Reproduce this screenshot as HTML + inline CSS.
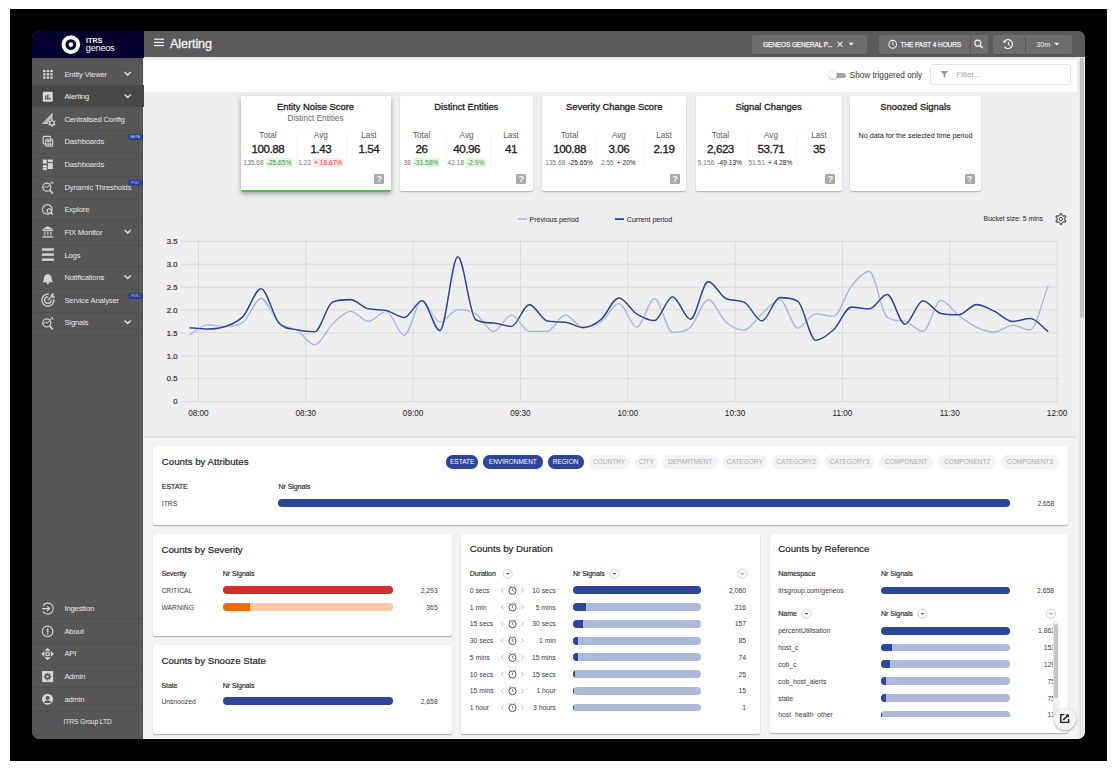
<!DOCTYPE html>
<html><head><meta charset="utf-8">
<style>
*{margin:0;padding:0;box-sizing:border-box}
html,body{width:1117px;height:775px;overflow:hidden;background:#fff;font-family:"Liberation Sans",sans-serif}
.a{position:absolute}
#frame{position:absolute;left:10px;top:9px;width:1097px;height:752px;background:#000}
#app{position:absolute;left:32px;top:31px;width:1053px;height:708px;background:#eeeeee;border-radius:7px;overflow:hidden}
#side{position:absolute;left:0;top:0;width:111.4px;height:708px;background:#565656}
#sidehead{position:absolute;left:0;top:0;width:112px;height:27px;background:#06002e}
.st{position:absolute;left:64.4px;font-size:7.6px;line-height:10px;color:#e8e8e8;white-space:nowrap;letter-spacing:-0.12px}
.badge{position:absolute;left:128px;width:14.5px;height:6px;border-radius:3px;background:#2d3f9a;color:#cfd6f5;font-size:3.6px;line-height:6px;text-align:center;letter-spacing:0.1px}

.hb{position:absolute;top:34.8px;height:19.4px;background:#6d6d6d;border-radius:2.5px;box-shadow:0 0.6px 0 #4a4a4a}
.ht{position:absolute;font-size:6.5px;line-height:8px;color:#f2f2f2;white-space:nowrap;-webkit-text-stroke:0.25px #f2f2f2}
.card{position:absolute;top:96.3px;height:94.7px;background:#fff;border-radius:2px;box-shadow:0 1px 1.5px rgba(0,0,0,0.25)}
.ctitle{position:absolute;left:0;right:0;top:102.2px;text-align:center;font-size:9.4px;line-height:10px;color:#1e1e1e;white-space:nowrap;-webkit-text-stroke:0.3px #1e1e1e}
.lab{position:absolute;font-size:8.2px;line-height:10px;color:#5a5a5a;text-align:center;white-space:nowrap;width:60px;margin-left:-30px}
.val{position:absolute;font-size:11.6px;line-height:12px;color:#1a1a1a;text-align:center;white-space:nowrap;width:80px;margin-left:-40px;letter-spacing:-0.45px;-webkit-text-stroke:0.3px #1a1a1a}
.chg{position:absolute;font-size:6.6px;line-height:8px;color:#777;white-space:nowrap}
.pos{background:#e6f4e6;color:#3a973a;padding:1px 1.2px;border-radius:1px}
.neg{background:#fce6e6;color:#dc4848;padding:1px 1.2px;border-radius:1px}
.blk{color:#222;padding:0 1.2px}
.qm{position:absolute;width:10px;height:10px;background:#a9a9a9;border-radius:1.2px;color:#fff;font-size:9.4px;line-height:10.4px;text-align:center;font-weight:bold}
.vdiv{position:absolute;top:134px;height:32px;width:0.8px;background:#f5f5f5}

.yl{left:137px;width:40.5px;text-align:right;font-size:7.7px;line-height:10px;color:#222;-webkit-text-stroke:0.15px #222}
.xl{width:40px;text-align:center;font-size:8.2px;line-height:10px;color:#1a1a1a}
.leg{font-size:7.1px;line-height:10px;color:#222;white-space:nowrap}
.sc{position:absolute;background:#fff;border-radius:2px;box-shadow:0 1px 1.2px rgba(0,0,0,0.3)}
.stt{font-size:9.7px;line-height:12px;color:#1e1e1e;white-space:nowrap;-webkit-text-stroke:0.2px #1e1e1e}
.sh{font-size:7.1px;line-height:10px;color:#1e1e1e;white-space:nowrap;-webkit-text-stroke:0.15px #1e1e1e;letter-spacing:-0.1px}
.sx{font-size:6.8px;line-height:10px;color:#3a3a3a;white-space:nowrap}
.chip{position:absolute;top:455.3px;height:13.3px;border-radius:6.6px;background:#2c4597;color:#fff;font-size:6.5px;line-height:13.3px;text-align:center;white-space:nowrap;overflow:hidden}
.chip.off{background:#f3f3f3;color:#a9a9a9}
</style></head>
<body>
<div id="frame"></div>
<div id="app">
  <div id="main" class="a" style="left:112px;top:0;width:941px;height:708px;background:#eeeeee"></div>
  <div id="side">
    <div id="sidehead"></div>
    <div class="a" style="left:0;top:54px;width:112px;height:22.4px;background:#484848"></div>
  </div>
</div>

<svg class="a" style="left:0;top:0" width="140" height="60">
  <circle cx="70.85" cy="44.6" r="9.3" fill="#fff"/>
  <path d="M68.6,35.1 l1.6,0.2 l-0.8,1.1 z M75.2,36.2 l2.2,0.4 l-1.4,1.3 z M60.9,44.8 l0.9,1.8 l-1.2,0.3 z M63.2,51.2 l1.6,0.8 l-1.4,0.9 z M79.9,47.5 l0.5,1.6 l-1.3,-0.2 z" fill="#06002e"/>
  <circle cx="70.85" cy="44.6" r="5.4" fill="#06002e"/>
  <circle cx="70.85" cy="44.6" r="2.3" fill="#fff"/>
</svg>
<div class="a" style="left:86px;top:37.2px;font-size:6.9px;line-height:8px;font-weight:bold;color:#fff;letter-spacing:0.2px">ITRS</div>
<div class="a" style="left:85.8px;top:43.1px;font-size:9.2px;line-height:10px;color:#fff;letter-spacing:-0.25px">geneos</div>
<!-- sidebar content in page coordinates -->
<svg class="a" style="left:0;top:0" width="1117" height="775">
<rect x="43.1" y="69.9" width="2.4" height="2.2" fill="#d6d6d6"/><rect x="43.1" y="73.2" width="2.4" height="2.2" fill="#d6d6d6"/><rect x="43.1" y="76.5" width="2.4" height="2.2" fill="#d6d6d6"/><rect x="46.7" y="69.9" width="2.4" height="2.2" fill="#d6d6d6"/><rect x="46.7" y="73.2" width="2.4" height="2.2" fill="#d6d6d6"/><rect x="46.7" y="76.5" width="2.4" height="2.2" fill="#d6d6d6"/><rect x="50.3" y="69.9" width="2.4" height="2.2" fill="#d6d6d6"/><rect x="50.3" y="73.2" width="2.4" height="2.2" fill="#d6d6d6"/><rect x="50.3" y="76.5" width="2.4" height="2.2" fill="#d6d6d6"/><path d="M124.6,71.9 l3.1,3 l3.1,-3" fill="none" stroke="#e0e0e0" stroke-width="1.45"/><rect x="42.8" y="91.7" width="10" height="10" rx="1" fill="#d6d6d6"/><rect x="45.2" y="95.7" width="1.2" height="4" fill="#4b4b4b"/><rect x="47.2" y="94.7" width="1.2" height="5" fill="#4b4b4b"/><rect x="49.2" y="97.7" width="1.2" height="2" fill="#4b4b4b"/><path d="M124.6,94.4 l3.1,3 l3.1,-3" fill="none" stroke="#e0e0e0" stroke-width="1.45"/><path d="M41.7,123.9 L52.6,112.6 L52.6,123.9 Z" fill="#bdbdbd"/><circle cx="52" cy="122.9" r="3.6" fill="#565656"/><rect x="51.3" y="119.1" width="1.4" height="1.6" fill="#d6d6d6" transform="rotate(0 52 122.9)"/><rect x="51.3" y="119.1" width="1.4" height="1.6" fill="#d6d6d6" transform="rotate(60 52 122.9)"/><rect x="51.3" y="119.1" width="1.4" height="1.6" fill="#d6d6d6" transform="rotate(120 52 122.9)"/><rect x="51.3" y="119.1" width="1.4" height="1.6" fill="#d6d6d6" transform="rotate(180 52 122.9)"/><rect x="51.3" y="119.1" width="1.4" height="1.6" fill="#d6d6d6" transform="rotate(240 52 122.9)"/><rect x="51.3" y="119.1" width="1.4" height="1.6" fill="#d6d6d6" transform="rotate(300 52 122.9)"/><circle cx="52" cy="122.9" r="2.2" fill="none" stroke="#d6d6d6" stroke-width="1.1"/><rect x="43.2" y="136.4" width="7.4" height="7.6" rx="1.2" fill="none" stroke="#d6d6d6" stroke-width="1.1"/><rect x="45.7" y="139.3" width="6.9" height="7" rx="1" fill="#565656" stroke="#d6d6d6" stroke-width="1.1"/><rect x="46.7" y="140.3" width="4.9" height="1.4" rx="0.7" fill="#d6d6d6"/><path d="M46.2,144.1 h6 M48.2,142.3 v3.8 M50.2,142.3 v3.8" stroke="#d6d6d6" stroke-width="0.9"/><rect x="42.8" y="159.6" width="4" height="4" fill="#d6d6d6"/><rect x="47.8" y="159.6" width="5" height="2.5" fill="#d6d6d6"/><rect x="42.8" y="165.1" width="4" height="2.5" fill="#d6d6d6"/><rect x="47.8" y="163.1" width="5" height="6" fill="#d6d6d6"/><rect x="42.8" y="168.1" width="4" height="2" fill="#d6d6d6"/><circle cx="46.8" cy="187.2" r="4" fill="none" stroke="#d6d6d6" stroke-width="1.2"/><path d="M49.8,190.2 l3,3.5" stroke="#d6d6d6" stroke-width="1.6"/><path d="M43.8,188.2 l2,-2 l1.5,1.5 l3.5,-4.5 M50.8,182.2 h2 v2" fill="none" stroke="#d6d6d6" stroke-width="1"/><circle cx="47.3" cy="209.4" r="4.8" fill="none" stroke="#d6d6d6" stroke-width="1.1"/><circle cx="49.3" cy="210.9" r="2.2" fill="#565656" stroke="#d6d6d6" stroke-width="1.1"/><path d="M50.8,212.5 l2.2,2.2" stroke="#d6d6d6" stroke-width="1.3"/><path d="M42.3,229.3 L47.8,226.3 L53.3,229.3 Z" fill="#d6d6d6"/><rect x="42.3" y="229.7" width="11" height="1.2" fill="#d6d6d6"/><rect x="44.3" y="231.3" width="1.1" height="4" fill="#d6d6d6"/><rect x="47.3" y="231.3" width="1.1" height="4" fill="#d6d6d6"/><rect x="50.3" y="231.3" width="1.1" height="4" fill="#d6d6d6"/><rect x="42.3" y="236.3" width="11" height="1.2" fill="#d6d6d6"/><path d="M124.6,230.0 l3.1,3 l3.1,-3" fill="none" stroke="#e0e0e0" stroke-width="1.45"/><rect x="41.9" y="248.3" width="12" height="2.4" fill="#d6d6d6"/><rect x="41.9" y="253.4" width="12" height="2.4" fill="#d6d6d6"/><rect x="41.9" y="258.5" width="12" height="2.4" fill="#d6d6d6"/><path d="M43.8,279.7 c0,-3 1,-5.5 4,-5.5 c3,0 4,2.5 4,5.5 l1,2.5 h-10 z" fill="#d6d6d6"/><circle cx="47.8" cy="283.0" r="1.2" fill="#d6d6d6"/><path d="M124.6,275.4 l3.1,3 l3.1,-3" fill="none" stroke="#e0e0e0" stroke-width="1.45"/><path d="M48.8,294.2 A6,6 0 1 0 53.8,299.2" fill="none" stroke="#d6d6d6" stroke-width="1.3"/><path d="M48.3,296.9 A3.3,3.3 0 1 0 51.1,299.7" fill="none" stroke="#d6d6d6" stroke-width="1.3"/><path d="M47.8,300.2 l5,-5 M50.8,295.2 h2 v-2 M52.8,295.2 v2 h2" fill="none" stroke="#d6d6d6" stroke-width="1.2"/><circle cx="46.8" cy="322.9" r="4" fill="none" stroke="#d6d6d6" stroke-width="1.2"/><path d="M49.8,325.9 l3,3.5" stroke="#d6d6d6" stroke-width="1.6"/><path d="M43.8,323.9 l2,-2 l1.5,1.5 l3.5,-4.5 M50.8,317.9 h2 v2" fill="none" stroke="#d6d6d6" stroke-width="1"/><path d="M124.6,320.6 l3.1,3 l3.1,-3" fill="none" stroke="#e0e0e0" stroke-width="1.45"/><path d="M43.1,605.6 A5.5,5.5 0 1 1 43.1,611.6 M43.1,605.6 A5.5,5.5 0 0 0 43.1,605.6" fill="none" stroke="#d6d6d6" stroke-width="1.1"/><path d="M42.1,608.6 h7 M47.1,606.1 l2.5,2.5 l-2.5,2.5" fill="none" stroke="#d6d6d6" stroke-width="1.1"/><circle cx="47.6" cy="631.4" r="5.3" fill="none" stroke="#d6d6d6" stroke-width="1.1"/><rect x="46.9" y="628.4" width="1.5" height="4" fill="#d6d6d6"/><rect x="46.9" y="633.2" width="1.5" height="1.5" fill="#d6d6d6"/><path d="M47.60,647.70 L53.90,654.00 L47.60,660.30 L41.30,654.00 Z" fill="#d6d6d6"/><circle cx="47.6" cy="654.0" r="3.4" fill="#565656"/><path d="M43.00,649.40 l3,3 M52.20,649.40 l-3,3 M43.00,658.60 l3,-3 M52.20,658.60 l-3,-3" stroke="#565656" stroke-width="1.1"/><circle cx="47.6" cy="654.0" r="1.8" fill="none" stroke="#d6d6d6" stroke-width="1.3"/><rect x="42.1" y="671.1" width="11" height="11" fill="#d6d6d6"/><circle cx="47.6" cy="676.6" r="2.6" fill="#565656"/><rect x="46.90" y="672.80" width="1.4" height="1.6" fill="#565656" transform="rotate(0 47.60 676.60)"/><rect x="46.90" y="672.80" width="1.4" height="1.6" fill="#565656" transform="rotate(45 47.60 676.60)"/><rect x="46.90" y="672.80" width="1.4" height="1.6" fill="#565656" transform="rotate(90 47.60 676.60)"/><rect x="46.90" y="672.80" width="1.4" height="1.6" fill="#565656" transform="rotate(135 47.60 676.60)"/><rect x="46.90" y="672.80" width="1.4" height="1.6" fill="#565656" transform="rotate(180 47.60 676.60)"/><rect x="46.90" y="672.80" width="1.4" height="1.6" fill="#565656" transform="rotate(225 47.60 676.60)"/><rect x="46.90" y="672.80" width="1.4" height="1.6" fill="#565656" transform="rotate(270 47.60 676.60)"/><rect x="46.90" y="672.80" width="1.4" height="1.6" fill="#565656" transform="rotate(315 47.60 676.60)"/><circle cx="47.6" cy="676.6" r="1.1" fill="#d6d6d6"/><circle cx="47.6" cy="699.2" r="5.5" fill="#d6d6d6"/><circle cx="47.6" cy="697.9" r="2" fill="#565656"/><path d="M44.1,703.0 a3.5,2.5 0 0 1 7,0 z" fill="#565656"/>
</svg>
<div class="a" style="left:32px;top:85.5px;width:111.4px;height:0.8px;background:#505050"></div><div class="a" style="left:32px;top:108.1px;width:111.4px;height:0.8px;background:#505050"></div><div class="a" style="left:32px;top:130.7px;width:111.4px;height:0.8px;background:#505050"></div><div class="a" style="left:32px;top:153.4px;width:111.4px;height:0.8px;background:#505050"></div><div class="a" style="left:32px;top:176.0px;width:111.4px;height:0.8px;background:#505050"></div><div class="a" style="left:32px;top:198.6px;width:111.4px;height:0.8px;background:#505050"></div><div class="a" style="left:32px;top:221.2px;width:111.4px;height:0.8px;background:#505050"></div><div class="a" style="left:32px;top:243.8px;width:111.4px;height:0.8px;background:#505050"></div><div class="a" style="left:32px;top:266.5px;width:111.4px;height:0.8px;background:#505050"></div><div class="a" style="left:32px;top:289.1px;width:111.4px;height:0.8px;background:#505050"></div><div class="a" style="left:32px;top:311.7px;width:111.4px;height:0.8px;background:#505050"></div><div class="a" style="left:32px;top:334.3px;width:111.4px;height:0.8px;background:#505050"></div><div class="a" style="left:32px;top:619.4px;width:111.4px;height:0.8px;background:#505050"></div><div class="a" style="left:32px;top:642.0px;width:111.4px;height:0.8px;background:#505050"></div><div class="a" style="left:32px;top:664.6px;width:111.4px;height:0.8px;background:#505050"></div><div class="a" style="left:32px;top:687.2px;width:111.4px;height:0.8px;background:#505050"></div><div class="a" style="left:32px;top:709.8px;width:111.4px;height:0.8px;background:#505050"></div><div class="st" style="top:69.6px">Entity Viewer</div><div class="st" style="top:92.1px">Alerting</div><div class="st" style="top:114.8px">Centralised Config</div><div class="st" style="top:137.2px">Dashboards</div><div class="badge" style="top:134.4px">BETA</div><div class="st" style="top:160.0px">Dashboards</div><div class="st" style="top:182.6px">Dynamic Thresholds</div><div class="badge" style="top:179.8px">POC</div><div class="st" style="top:205.3px">Explore</div><div class="st" style="top:227.7px">FIX Monitor</div><div class="st" style="top:250.7px">Logs</div><div class="st" style="top:273.1px">Notifications</div><div class="st" style="top:295.6px">Service Analyser</div><div class="badge" style="top:292.8px">POC</div><div class="st" style="top:318.3px">Signals</div><div class="st" style="top:604.0px;left:64.4px">Ingestion</div><div class="st" style="top:626.8px;left:64.4px">About</div><div class="st" style="top:649.4px;left:64.4px">API</div><div class="st" style="top:672.0px;left:64.4px">Admin</div><div class="st" style="top:694.6px;left:64.4px">admin</div><div class="st" style="top:717.4px;left:63.6px;font-size:6.7px">ITRS Group LTD</div>

<!-- header -->
<div class="a" style="left:144px;top:31px;width:941px;height:26px;background:#5a5a5a;border-top-right-radius:7px;box-shadow:0 1px 0 #4e4e4e"></div>
<div class="a" style="left:144px;top:57px;width:933px;height:34.5px;background:#fff"></div>
<div class="a" style="left:144px;top:57px;width:941px;height:4px;background:linear-gradient(rgba(0,0,0,0.13),rgba(0,0,0,0))"></div>
<svg class="a" style="left:0;top:0" width="1117" height="100">
  <rect x="154" y="38.6" width="10" height="1.25" fill="#f2f2f2"/>
  <rect x="154" y="41.8" width="10" height="1.25" fill="#f2f2f2"/>
  <rect x="154" y="44.9" width="10" height="1.25" fill="#f2f2f2"/>
</svg>
<div class="a" style="left:170px;top:35.7px;font-size:12.6px;line-height:16px;color:#f4f4f4;white-space:nowrap;-webkit-text-stroke:0.3px #f4f4f4;letter-spacing:-0.1px">Alerting</div>
<div class="hb" style="left:752px;width:115px"></div>
<div class="ht" style="left:763px;top:40.5px;letter-spacing:-0.1px">GENEOS GENERAL P...</div>
<div class="hb" style="left:879px;width:109px"></div>
<div class="a" style="left:970px;top:34.8px;width:0.8px;height:19.4px;background:#595959"></div>
<div class="ht" style="left:900.5px;top:40.5px;letter-spacing:-0.08px">THE PAST 4 HOURS</div>
<div class="hb" style="left:993px;width:79px"></div>
<div class="a" style="left:1024.5px;top:34.8px;width:0.8px;height:19.4px;background:#595959"></div>
<div class="ht" style="left:1036.2px;top:41px;font-size:7.2px;-webkit-text-stroke:0">30m</div>
<svg class="a" style="left:0;top:0" width="1117" height="100">
  <path d="M837.6,41.8 l4.8,4.8 M842.4,41.8 l-4.8,4.8" stroke="#eee" stroke-width="1.1"/>
  <path d="M848.6,42.8 h5.4 l-2.7,2.8 z" fill="#eee"/>
  <circle cx="892.7" cy="44.3" r="3.9" fill="none" stroke="#eee" stroke-width="1.1"/>
  <path d="M892.7,42 v2.5 l1.6,1" fill="none" stroke="#eee" stroke-width="0.9"/>
  <circle cx="977.8" cy="43.2" r="3" fill="none" stroke="#eee" stroke-width="1.2"/>
  <path d="M980,45.4 l2.8,2.8" stroke="#eee" stroke-width="1.4"/>
  <path d="M1004.3,41.5 A4.5,4.5 0 1 1 1004.5,47" fill="none" stroke="#eee" stroke-width="1.2"/>
  <path d="M1002.5,40.5 l1.6,2.8 l2.4,-1.8 z" fill="#eee"/>
  <path d="M1008.6,42 v2.6 l1.8,1.1" fill="none" stroke="#eee" stroke-width="1"/>
  <path d="M1054,42.8 h5.4 l-2.7,2.8 z" fill="#eee"/>
</svg>
<!-- toolbar -->
<div class="a" style="left:830px;top:72.6px;width:16px;height:5.2px;border-radius:2.6px;background:#a5a5a5"></div>
<div class="a" style="left:828.5px;top:70.8px;width:8.5px;height:8.5px;border-radius:50%;background:#fafafa;box-shadow:0 0.5px 1.5px rgba(0,0,0,0.45)"></div>
<div class="a" style="left:849.8px;top:70.5px;font-size:8.2px;line-height:10px;color:#333;white-space:nowrap">Show triggered only</div>
<div class="a" style="left:930px;top:64.4px;width:140.6px;height:20.2px;border:1px solid #e2e2e2;border-radius:3px;background:#fff"></div>
<svg class="a" style="left:0;top:0" width="1117" height="100"><path d="M940.6,71 h7.6 l-2.9,3.4 v3.6 l-1.8,-1 v-2.6 z" fill="#9a9a9a"/></svg>
<div class="a" style="left:956.3px;top:70px;font-size:8px;line-height:10px;color:#a6a6a6;white-space:nowrap">Filter...</div>
<!-- scroll track -->
<div class="a" style="left:1077px;top:57px;width:8px;height:682px;background:linear-gradient(90deg,#f4f4f4,#e4e4e4 40%,#e8e8e8 85%,#f6f6f6)"></div>
<div class="a" style="left:1079.9px;top:58.4px;width:4.1px;height:259.6px;border-radius:0 0 2px 2px;background:#c0c0c0"></div>

<svg class="a" style="left:0;top:0" width="1117" height="775"><rect x="180.8" y="401.10" width="877" height="1" fill="#dadada"/><rect x="180.8" y="378.20" width="877" height="1" fill="#dadada"/><rect x="180.8" y="355.30" width="877" height="1" fill="#dadada"/><rect x="180.8" y="332.40" width="877" height="1" fill="#dadada"/><rect x="180.8" y="309.50" width="877" height="1" fill="#dadada"/><rect x="180.8" y="286.60" width="877" height="1" fill="#dadada"/><rect x="180.8" y="263.70" width="877" height="1" fill="#dadada"/><rect x="180.8" y="240.80" width="877" height="1" fill="#dadada"/><rect x="198.05" y="241.1" width="0.8" height="160.5" fill="#d4d4d4"/><rect x="305.38" y="241.1" width="0.8" height="160.5" fill="#d4d4d4"/><rect x="412.71" y="241.1" width="0.8" height="160.5" fill="#d4d4d4"/><rect x="520.04" y="241.1" width="0.8" height="160.5" fill="#d4d4d4"/><rect x="627.37" y="241.1" width="0.8" height="160.5" fill="#d4d4d4"/><rect x="734.70" y="241.1" width="0.8" height="160.5" fill="#d4d4d4"/><rect x="842.03" y="241.1" width="0.8" height="160.5" fill="#d4d4d4"/><rect x="949.36" y="241.1" width="0.8" height="160.5" fill="#d4d4d4"/><rect x="1056.69" y="241.1" width="0.8" height="160.5" fill="#d4d4d4"/><path d="M189.45,334.90 C195.41,331.53 201.38,324.80 207.34,324.80 C213.30,324.80 219.27,326.50 225.23,326.50 C231.19,326.50 237.16,326.50 243.12,322.30 C249.08,318.10 255.05,298.50 261.01,298.50 C266.97,298.50 272.94,317.78 278.90,323.00 C284.86,328.22 290.83,326.15 296.79,329.80 C302.75,333.45 308.72,344.90 314.68,344.90 C320.64,344.90 326.61,329.50 332.57,323.90 C338.53,318.30 344.50,311.30 350.46,311.30 C356.42,311.30 362.39,321.40 368.35,321.40 C374.31,321.40 380.28,311.30 386.24,311.30 C392.20,311.30 398.17,335.30 404.13,335.30 C410.09,335.30 416.06,300.70 422.02,300.70 C427.98,300.70 433.95,322.20 439.91,322.20 C445.87,322.20 451.84,309.60 457.80,309.60 C463.76,309.60 469.73,310.17 475.69,313.80 C481.65,317.43 487.62,331.40 493.58,331.40 C499.54,331.40 505.51,315.20 511.47,315.20 C517.43,315.20 523.40,331.40 529.36,331.40 C535.32,331.40 541.29,331.40 547.25,331.40 C553.21,331.40 559.18,315.20 565.14,315.20 C571.10,315.20 577.07,327.20 583.03,327.20 C588.99,327.20 594.96,326.17 600.92,322.20 C606.88,318.23 612.85,303.40 618.81,303.40 C624.77,303.40 630.74,327.20 636.70,327.20 C642.66,327.20 648.63,298.70 654.59,298.70 C660.55,298.70 666.52,332.30 672.48,332.30 C678.44,332.30 684.41,332.30 690.37,327.20 C696.33,322.10 702.30,299.60 708.26,299.60 C714.22,299.60 720.19,317.12 726.15,322.20 C732.11,327.28 738.08,330.10 744.04,330.10 C750.00,330.10 755.97,318.88 761.93,313.80 C767.89,308.72 773.86,299.60 779.82,299.60 C785.78,299.60 791.75,328.10 797.71,328.10 C803.67,328.10 809.64,313.80 815.60,313.80 C821.56,313.80 827.53,316.30 833.49,316.30 C839.45,316.30 845.42,293.57 851.38,286.10 C857.34,278.63 863.31,271.50 869.27,271.50 C875.23,271.50 881.20,313.16 887.16,317.20 C893.12,321.24 899.09,320.25 905.05,321.40 C911.01,322.55 916.98,331.40 922.94,331.40 C928.90,331.40 934.87,300.40 940.83,300.40 C946.79,300.40 952.76,311.02 958.72,315.50 C964.68,319.98 970.65,324.55 976.61,327.30 C982.57,330.05 988.54,332.00 994.50,332.00 C1000.46,332.00 1006.43,325.30 1012.39,325.30 C1018.35,325.30 1024.32,329.80 1030.28,329.80 C1036.24,329.80 1042.21,300.40 1048.17,285.70" fill="none" stroke="#a7b3de" stroke-width="1.3"/><path d="M189.45,327.80 C195.41,328.20 201.38,329.00 207.34,329.00 C213.30,329.00 219.27,328.60 225.23,326.50 C231.19,324.40 237.16,322.70 243.12,316.40 C249.08,310.10 255.05,288.70 261.01,288.70 C266.97,288.70 272.94,316.35 278.90,323.00 C284.86,329.65 290.83,328.38 296.79,329.80 C302.75,331.22 308.72,331.80 314.68,331.80 C320.64,331.80 326.61,304.40 332.57,302.00 C338.53,299.60 344.50,299.60 350.46,299.60 C356.42,299.60 362.39,307.47 368.35,308.80 C374.31,310.13 380.28,309.44 386.24,310.50 C392.20,311.56 398.17,317.50 404.13,317.50 C410.09,317.50 416.06,300.70 422.02,300.70 C427.98,300.70 433.95,330.60 439.91,330.60 C445.87,330.60 451.84,256.80 457.80,256.80 C463.76,256.80 469.73,316.42 475.69,319.70 C481.65,322.98 487.62,322.67 493.58,323.00 C499.54,323.33 505.51,326.40 511.47,326.40 C517.43,326.40 523.40,304.60 529.36,304.60 C535.32,304.60 541.29,319.88 547.25,321.00 C553.21,322.12 559.18,321.78 565.14,322.20 C571.10,322.62 577.07,327.60 583.03,327.60 C588.99,327.60 594.96,324.65 600.92,319.70 C606.88,314.75 612.85,297.90 618.81,297.90 C624.77,297.90 630.74,310.03 636.70,313.80 C642.66,317.57 648.63,320.50 654.59,320.50 C660.55,320.50 666.52,296.70 672.48,296.70 C678.44,296.70 684.41,319.20 690.37,319.20 C696.33,319.20 702.30,281.60 708.26,281.60 C714.22,281.60 720.19,296.39 726.15,298.70 C732.11,301.01 738.08,299.60 744.04,302.10 C750.00,304.60 755.97,320.90 761.93,320.90 C767.89,320.90 773.86,297.60 779.82,297.60 C785.78,297.60 791.75,297.60 797.71,301.20 C803.67,304.80 809.64,340.20 815.60,340.20 C821.56,340.20 827.53,335.32 833.49,329.80 C839.45,324.28 845.42,307.10 851.38,307.10 C857.34,307.10 863.31,308.80 869.27,308.80 C875.23,308.80 881.20,294.50 887.16,294.50 C893.12,294.50 899.09,324.20 905.05,324.20 C911.01,324.20 916.98,300.70 922.94,300.70 C928.90,300.70 934.87,312.30 940.83,313.50 C946.79,314.70 952.76,314.70 958.72,314.70 C964.68,314.70 970.65,304.60 976.61,304.60 C982.57,304.60 988.54,308.50 994.50,311.30 C1000.46,314.10 1006.43,321.40 1012.39,321.40 C1018.35,321.40 1024.32,318.50 1030.28,318.50 C1036.24,318.50 1042.21,327.17 1048.17,331.50" fill="none" stroke="#fff" stroke-opacity="0.5" stroke-width="3.2"/><path d="M189.45,327.80 C195.41,328.20 201.38,329.00 207.34,329.00 C213.30,329.00 219.27,328.60 225.23,326.50 C231.19,324.40 237.16,322.70 243.12,316.40 C249.08,310.10 255.05,288.70 261.01,288.70 C266.97,288.70 272.94,316.35 278.90,323.00 C284.86,329.65 290.83,328.38 296.79,329.80 C302.75,331.22 308.72,331.80 314.68,331.80 C320.64,331.80 326.61,304.40 332.57,302.00 C338.53,299.60 344.50,299.60 350.46,299.60 C356.42,299.60 362.39,307.47 368.35,308.80 C374.31,310.13 380.28,309.44 386.24,310.50 C392.20,311.56 398.17,317.50 404.13,317.50 C410.09,317.50 416.06,300.70 422.02,300.70 C427.98,300.70 433.95,330.60 439.91,330.60 C445.87,330.60 451.84,256.80 457.80,256.80 C463.76,256.80 469.73,316.42 475.69,319.70 C481.65,322.98 487.62,322.67 493.58,323.00 C499.54,323.33 505.51,326.40 511.47,326.40 C517.43,326.40 523.40,304.60 529.36,304.60 C535.32,304.60 541.29,319.88 547.25,321.00 C553.21,322.12 559.18,321.78 565.14,322.20 C571.10,322.62 577.07,327.60 583.03,327.60 C588.99,327.60 594.96,324.65 600.92,319.70 C606.88,314.75 612.85,297.90 618.81,297.90 C624.77,297.90 630.74,310.03 636.70,313.80 C642.66,317.57 648.63,320.50 654.59,320.50 C660.55,320.50 666.52,296.70 672.48,296.70 C678.44,296.70 684.41,319.20 690.37,319.20 C696.33,319.20 702.30,281.60 708.26,281.60 C714.22,281.60 720.19,296.39 726.15,298.70 C732.11,301.01 738.08,299.60 744.04,302.10 C750.00,304.60 755.97,320.90 761.93,320.90 C767.89,320.90 773.86,297.60 779.82,297.60 C785.78,297.60 791.75,297.60 797.71,301.20 C803.67,304.80 809.64,340.20 815.60,340.20 C821.56,340.20 827.53,335.32 833.49,329.80 C839.45,324.28 845.42,307.10 851.38,307.10 C857.34,307.10 863.31,308.80 869.27,308.80 C875.23,308.80 881.20,294.50 887.16,294.50 C893.12,294.50 899.09,324.20 905.05,324.20 C911.01,324.20 916.98,300.70 922.94,300.70 C928.90,300.70 934.87,312.30 940.83,313.50 C946.79,314.70 952.76,314.70 958.72,314.70 C964.68,314.70 970.65,304.60 976.61,304.60 C982.57,304.60 988.54,308.50 994.50,311.30 C1000.46,314.10 1006.43,321.40 1012.39,321.40 C1018.35,321.40 1024.32,318.50 1030.28,318.50 C1036.24,318.50 1042.21,327.17 1048.17,331.50" fill="none" stroke="#2c4597" stroke-width="1.55"/><rect x="518" y="218.4" width="9" height="1.4" fill="#a7b3de"/><rect x="615" y="218.2" width="9" height="1.8" fill="#2c4597"/><path d="M1058.95,215.62 L1059.93,215.12 L1060.07,213.77 L1061.73,213.77 L1061.87,215.12 L1062.85,215.62 L1063.78,216.22 L1065.02,215.66 L1065.85,217.10 L1064.75,217.90 L1064.80,219.00 L1064.75,220.10 L1065.85,220.90 L1065.02,222.34 L1063.78,221.78 L1062.85,222.38 L1061.87,222.88 L1061.73,224.23 L1060.07,224.23 L1059.93,222.88 L1058.95,222.38 L1058.02,221.78 L1056.78,222.34 L1055.95,220.90 L1057.05,220.10 L1057.00,219.00 L1057.05,217.90 L1055.95,217.10 L1056.78,215.66 L1058.02,216.22 Z" fill="none" stroke="#444" stroke-width="1.05" stroke-linejoin="round"/><circle cx="1060.90" cy="219.00" r="1.6" fill="none" stroke="#444" stroke-width="1"/></svg><div class="a yl" style="top:397.3px">0</div><div class="a yl" style="top:374.4px">0.5</div><div class="a yl" style="top:351.5px">1.0</div><div class="a yl" style="top:328.6px">1.5</div><div class="a yl" style="top:305.7px">2.0</div><div class="a yl" style="top:282.8px">2.5</div><div class="a yl" style="top:259.9px">3.0</div><div class="a yl" style="top:237.0px">3.5</div><div class="a xl" style="left:178.4px;top:408.6px">08:00</div><div class="a xl" style="left:285.8px;top:408.6px">08:30</div><div class="a xl" style="left:393.1px;top:408.6px">09:00</div><div class="a xl" style="left:500.4px;top:408.6px">09:30</div><div class="a xl" style="left:607.8px;top:408.6px">10:00</div><div class="a xl" style="left:715.1px;top:408.6px">10:30</div><div class="a xl" style="left:822.4px;top:408.6px">11:00</div><div class="a xl" style="left:929.8px;top:408.6px">11:30</div><div class="a xl" style="left:1037.1px;top:408.6px">12:00</div><div class="a leg" style="left:529.5px;top:214.6px">Previous period</div><div class="a leg" style="left:626.8px;top:214.6px">Current period</div><div class="a leg" style="left:983.6px;top:214.3px;font-size:6.9px">Bucket size: 5 mins</div><div class="a" style="left:144px;top:435.8px;width:933px;height:2px;background:#e2e2e2"></div><div class="a" style="left:144px;top:437.8px;width:933px;height:301.2px;background:#f4f4f4"></div><div class="a" style="left:144px;top:737.6px;width:933px;height:1.4px;background:#fbfbfb"></div>
<div class="card" style="left:240.5px;width:150.0px;box-shadow:0 2px 5px rgba(0,0,0,0.32);border-bottom:2px solid #5ab85a;height:95.6px"></div><div class="ctitle" style="left:240.5px;width:150.0px;right:auto">Entity Noise Score</div><div class="a" style="left:240.5px;width:150.0px;top:114.4px;text-align:center;font-size:8.2px;line-height:10px;color:#666;white-space:nowrap">Distinct Entities</div><div class="lab" style="left:268.0px;top:131.3px">Total</div><div class="val" style="left:268.0px;top:142.7px">100.88</div><div class="chg" style="left:268.0px;top:158.6px;width:80px;margin-left:-40px;text-align:center">135.68 <span class="pos">-25.65%</span></div><div class="lab" style="left:320.8px;top:131.3px">Avg</div><div class="val" style="left:320.8px;top:142.7px">1.43</div><div class="chg" style="left:320.8px;top:158.6px;width:80px;margin-left:-40px;text-align:center">1.22 <span class="neg">+ 16.67%</span></div><div class="lab" style="left:368.9px;top:131.3px">Last</div><div class="val" style="left:368.9px;top:142.7px">1.54</div><div class="vdiv" style="left:295.9px"></div><div class="vdiv" style="left:346.4px"></div><div class="qm" style="left:374.3px;top:174.1px">?</div><div class="card" style="left:400.0px;width:132.5px"></div><div class="ctitle" style="left:400.0px;width:132.5px;right:auto">Distinct Entities</div><div class="lab" style="left:421.6px;top:131.3px">Total</div><div class="val" style="left:421.6px;top:142.7px">26</div><div class="chg" style="left:421.6px;top:158.6px;width:80px;margin-left:-40px;text-align:center">38 <span class="pos">-31.58%</span></div><div class="lab" style="left:466.6px;top:131.3px">Avg</div><div class="val" style="left:466.6px;top:142.7px">40.96</div><div class="chg" style="left:466.6px;top:158.6px;width:80px;margin-left:-40px;text-align:center">42.18 <span class="pos">-2.9%</span></div><div class="lab" style="left:511.0px;top:131.3px">Last</div><div class="val" style="left:511.0px;top:142.7px">41</div><div class="vdiv" style="left:445.6px"></div><div class="vdiv" style="left:490.3px"></div><div class="qm" style="left:516.3px;top:174.1px">?</div><div class="card" style="left:542.0px;width:144.4px"></div><div class="ctitle" style="left:542.0px;width:144.4px;right:auto">Severity Change Score</div><div class="lab" style="left:569.7px;top:131.3px">Total</div><div class="val" style="left:569.7px;top:142.7px">100.88</div><div class="chg" style="left:569.7px;top:158.6px;width:80px;margin-left:-40px;text-align:center">135.68 <span class="blk">-25.65%</span></div><div class="lab" style="left:618.9px;top:131.3px">Avg</div><div class="val" style="left:618.9px;top:142.7px">3.06</div><div class="chg" style="left:618.9px;top:158.6px;width:80px;margin-left:-40px;text-align:center">2.55 <span class="blk">+ 20%</span></div><div class="lab" style="left:664.0px;top:131.3px">Last</div><div class="val" style="left:664.0px;top:142.7px">2.19</div><div class="vdiv" style="left:595.8px"></div><div class="vdiv" style="left:643.0px"></div><div class="qm" style="left:670.2px;top:174.1px">?</div><div class="card" style="left:695.5px;width:146.0px"></div><div class="ctitle" style="left:695.5px;width:146.0px;right:auto">Signal Changes</div><div class="lab" style="left:720.5px;top:131.3px">Total</div><div class="val" style="left:720.5px;top:142.7px">2,623</div><div class="chg" style="left:720.5px;top:158.6px;width:80px;margin-left:-40px;text-align:center">5,156 <span class="blk">-49.13%</span></div><div class="lab" style="left:771.0px;top:131.3px">Avg</div><div class="val" style="left:771.0px;top:142.7px">53.71</div><div class="chg" style="left:771.0px;top:158.6px;width:80px;margin-left:-40px;text-align:center">51.51 <span class="blk">+ 4.28%</span></div><div class="lab" style="left:819.0px;top:131.3px">Last</div><div class="val" style="left:819.0px;top:142.7px">35</div><div class="vdiv" style="left:747.2px"></div><div class="vdiv" style="left:796.5px"></div><div class="qm" style="left:825.3px;top:174.1px">?</div><div class="card" style="left:850.3px;width:130.4px"></div><div class="ctitle" style="left:850.3px;width:130.4px;right:auto">Snoozed Signals</div><div class="a" style="left:850.3px;width:130.4px;top:130.5px;text-align:center;font-size:7.2px;line-height:10px;color:#222;white-space:nowrap">No data for the selected time period</div><div class="qm" style="left:964.5px;top:174.1px">?</div>
<div class="sc" style="left:152.9px;top:446.0px;width:915.1px;height:78.8px"></div><div class="a stt" style="left:161.8px;top:456.0px">Counts by Attributes</div><div class="a chip" style="left:446.1px;width:32.2px">ESTATE</div><div class="a chip" style="left:482.9px;width:59.9px">ENVIRONMENT</div><div class="a chip" style="left:547.6px;width:36.0px">REGION</div><div class="a chip off" style="left:588.5px;width:41.1px">COUNTRY</div><div class="a chip off" style="left:635.0px;width:22.8px">CITY</div><div class="a chip off" style="left:662.3px;width:55.7px">DEPARTMENT</div><div class="a chip off" style="left:722.6px;width:44.4px">CATEGORY</div><div class="a chip off" style="left:771.9px;width:48.4px">CATEGORY2</div><div class="a chip off" style="left:825.2px;width:48.8px">CATEGORY3</div><div class="a chip off" style="left:878.9px;width:54.6px">COMPONENT</div><div class="a chip off" style="left:937.8px;width:58.6px">COMPONENT2</div><div class="a chip off" style="left:1000.7px;width:58.6px">COMPONENT3</div><div class="a sh" style="left:161.8px;top:481.8px">ESTATE</div><div class="a sh" style="left:278.5px;top:481.8px">Nr Signals</div><div class="a sx" style="left:161.8px;top:498.7px;">ITRS</div><div class="a" style="left:278.4px;top:498.9px;width:731.3px;height:7.9px;border-radius:4px;background:#2c4597;overflow:hidden"><div style="width:731.30px;height:100%;background:#2c4597"></div></div><div class="a sx" style="left:994.4px;top:498.7px;width:60px;text-align:right">2,658</div><div class="sc" style="left:152.9px;top:534.0px;width:298.9px;height:101.8px"></div><div class="a stt" style="left:161.4px;top:543.6px">Counts by Severity</div><div class="a sh" style="left:161.4px;top:569.2px">Severity</div><div class="a sh" style="left:222.8px;top:569.2px">Nr Signals</div><div class="a sx" style="left:161.4px;top:585.9px;">CRITICAL</div><div class="a" style="left:222.8px;top:586.3px;width:170.4px;height:7.9px;border-radius:4px;background:#d32f2f;overflow:hidden"><div style="width:170.40px;height:100%;background:#d32f2f"></div></div><div class="a sx" style="left:377.7px;top:585.9px;width:60px;text-align:right">2,293</div><div class="a sx" style="left:161.4px;top:602.5px;">WARNING</div><div class="a" style="left:222.8px;top:603.0px;width:170.4px;height:7.9px;border-radius:4px;background:#f8c9a3;overflow:hidden"><div style="width:27.40px;height:100%;background:#ef6c00"></div></div><div class="a sx" style="left:377.7px;top:602.5px;width:60px;text-align:right">365</div><div class="sc" style="left:152.9px;top:644.9px;width:298.9px;height:89.3px"></div><div class="a stt" style="left:161.4px;top:654.8px">Counts by Snooze State</div><div class="a sh" style="left:161.4px;top:680.6px">State</div><div class="a sh" style="left:222.8px;top:680.6px">Nr Signals</div><div class="a sx" style="left:161.4px;top:697.0px;">Unsnoozed</div><div class="a" style="left:222.8px;top:697.3px;width:170.4px;height:7.9px;border-radius:4px;background:#2c4597;overflow:hidden"><div style="width:170.40px;height:100%;background:#2c4597"></div></div><div class="a sx" style="left:377.7px;top:697.0px;width:60px;text-align:right">2,658</div><div class="sc" style="left:460.7px;top:534.1px;width:299.5px;height:200.3px"></div><div class="a stt" style="left:469.8px;top:543.2px">Counts by Duration</div><div class="a sh" style="left:469.8px;top:569.1px">Duration</div><div class="a sh" style="left:573.0px;top:569.1px">Nr Signals</div><div class="a sx" style="left:469.8px;top:585.9px;">0 secs</div><div class="a sx" style="left:495.7px;top:585.9px;width:60px;text-align:right">10 secs</div><div class="a" style="left:573.0px;top:586.4px;width:128.2px;height:7.9px;border-radius:4px;background:#aeb8d9;overflow:hidden"><div style="width:128.20px;height:100%;background:#2c4597"></div></div><div class="a sx" style="left:686.0px;top:585.9px;width:60px;text-align:right">2,060</div><div class="a sx" style="left:469.8px;top:602.6px;">1 min</div><div class="a sx" style="left:495.7px;top:602.6px;width:60px;text-align:right">5 mins</div><div class="a" style="left:573.0px;top:603.2px;width:128.2px;height:7.9px;border-radius:4px;background:#aeb8d9;overflow:hidden"><div style="width:13.44px;height:100%;background:#2c4597"></div></div><div class="a sx" style="left:686.0px;top:602.6px;width:60px;text-align:right">216</div><div class="a sx" style="left:469.8px;top:619.4px;">15 secs</div><div class="a sx" style="left:495.7px;top:619.4px;width:60px;text-align:right">30 secs</div><div class="a" style="left:573.0px;top:619.9px;width:128.2px;height:7.9px;border-radius:4px;background:#aeb8d9;overflow:hidden"><div style="width:9.77px;height:100%;background:#2c4597"></div></div><div class="a sx" style="left:686.0px;top:619.4px;width:60px;text-align:right">157</div><div class="a sx" style="left:469.8px;top:636.1px;">30 secs</div><div class="a sx" style="left:495.7px;top:636.1px;width:60px;text-align:right">1 min</div><div class="a" style="left:573.0px;top:636.7px;width:128.2px;height:7.9px;border-radius:4px;background:#aeb8d9;overflow:hidden"><div style="width:5.29px;height:100%;background:#2c4597"></div></div><div class="a sx" style="left:686.0px;top:636.1px;width:60px;text-align:right">85</div><div class="a sx" style="left:469.8px;top:652.9px;">5 mins</div><div class="a sx" style="left:495.7px;top:652.9px;width:60px;text-align:right">15 mins</div><div class="a" style="left:573.0px;top:653.4px;width:128.2px;height:7.9px;border-radius:4px;background:#aeb8d9;overflow:hidden"><div style="width:4.61px;height:100%;background:#2c4597"></div></div><div class="a sx" style="left:686.0px;top:652.9px;width:60px;text-align:right">74</div><div class="a sx" style="left:469.8px;top:669.6px;">10 secs</div><div class="a sx" style="left:495.7px;top:669.6px;width:60px;text-align:right">15 secs</div><div class="a" style="left:573.0px;top:670.1px;width:128.2px;height:7.9px;border-radius:4px;background:#aeb8d9;overflow:hidden"><div style="width:1.56px;height:100%;background:#2c4597"></div></div><div class="a sx" style="left:686.0px;top:669.6px;width:60px;text-align:right">25</div><div class="a sx" style="left:469.8px;top:686.3px;">15 mins</div><div class="a sx" style="left:495.7px;top:686.3px;width:60px;text-align:right">1 hour</div><div class="a" style="left:573.0px;top:686.9px;width:128.2px;height:7.9px;border-radius:4px;background:#aeb8d9;overflow:hidden"><div style="width:0.93px;height:100%;background:#2c4597"></div></div><div class="a sx" style="left:686.0px;top:686.3px;width:60px;text-align:right">15</div><div class="a sx" style="left:469.8px;top:703.1px;">1 hour</div><div class="a sx" style="left:495.7px;top:703.1px;width:60px;text-align:right">3 hours</div><div class="a" style="left:573.0px;top:703.6px;width:128.2px;height:7.9px;border-radius:4px;background:#aeb8d9;overflow:hidden"><div style="width:0.30px;height:100%;background:#2c4597"></div></div><div class="a sx" style="left:686.0px;top:703.1px;width:60px;text-align:right">1</div><div class="sc" style="left:769.5px;top:533.9px;width:298.6px;height:199.4px"></div><div class="a stt" style="left:778.3px;top:543.0px">Counts by Reference</div><div class="a sh" style="left:778.3px;top:569.1px">Namespace</div><div class="a sh" style="left:881.1px;top:569.1px">Nr Signals</div><div class="a sx" style="left:778.3px;top:586.1px;">itrsgroup.com/geneos</div><div class="a" style="left:881.1px;top:586.6px;width:128.5px;height:7.9px;border-radius:4px;background:#2c4597;overflow:hidden"><div style="width:128.50px;height:100%;background:#2c4597"></div></div><div class="a sx" style="left:994.0px;top:586.1px;width:60px;text-align:right">2,658</div><div class="a sh" style="left:778.3px;top:609.0px">Name</div><div class="a sh" style="left:881.1px;top:609.0px">Nr Signals</div><div class="a" style="left:770px;top:622px;width:282.8px;height:95px;overflow:hidden"><div class="a sx" style="left:8.3px;top:4.3px">percentUtilisation</div><div class="a" style="left:111.1px;top:4.8px;width:128.5px;height:7.9px;border-radius:4px;background:#aeb8d9;overflow:hidden"><div style="width:128.50px;height:100%;background:#2c4597"></div></div><div class="a sx" style="left:225px;top:4.3px;width:60px;text-align:right">1,862</div><div class="a sx" style="left:8.3px;top:21.1px">host_c</div><div class="a" style="left:111.1px;top:21.6px;width:128.5px;height:7.9px;border-radius:4px;background:#aeb8d9;overflow:hidden"><div style="width:10.56px;height:100%;background:#2c4597"></div></div><div class="a sx" style="left:225px;top:21.1px;width:60px;text-align:right">153</div><div class="a sx" style="left:8.3px;top:37.9px">cob_c</div><div class="a" style="left:111.1px;top:38.4px;width:128.5px;height:7.9px;border-radius:4px;background:#aeb8d9;overflow:hidden"><div style="width:8.90px;height:100%;background:#2c4597"></div></div><div class="a sx" style="left:225px;top:37.9px;width:60px;text-align:right">129</div><div class="a sx" style="left:8.3px;top:54.7px">cob_host_alerts</div><div class="a" style="left:111.1px;top:55.2px;width:128.5px;height:7.9px;border-radius:4px;background:#aeb8d9;overflow:hidden"><div style="width:5.18px;height:100%;background:#2c4597"></div></div><div class="a sx" style="left:225px;top:54.7px;width:60px;text-align:right">75</div><div class="a sx" style="left:8.3px;top:71.5px">state</div><div class="a" style="left:111.1px;top:72.0px;width:128.5px;height:7.9px;border-radius:4px;background:#aeb8d9;overflow:hidden"><div style="width:5.18px;height:100%;background:#2c4597"></div></div><div class="a sx" style="left:225px;top:71.5px;width:60px;text-align:right">75</div><div class="a sx" style="left:8.3px;top:88.3px">host_health_other</div><div class="a" style="left:111.1px;top:88.8px;width:128.5px;height:7.9px;border-radius:4px;background:#aeb8d9;overflow:hidden"><div style="width:0.90px;height:100%;background:#2c4597"></div></div><div class="a sx" style="left:225px;top:88.3px;width:60px;text-align:right">13</div></div><div class="a" style="left:1052.6px;top:621px;width:6.4px;height:96px;background:#f1f1f1;border-left:0.6px solid #e6e6e6"></div><div class="a" style="left:1054.3px;top:624.3px;width:3.7px;height:73.7px;border-radius:1.8px;background:#c6c6c6"></div><div class="a" style="left:1054px;top:707.5px;width:22px;height:22px;border-radius:50%;background:#f3f3f3;box-shadow:0 1px 3px rgba(0,0,0,0.35)"></div><svg class="a" style="left:0;top:0" width="1117" height="775"><circle cx="507.6" cy="573.7" r="4.6" fill="#fff" stroke="#c4c4c4" stroke-width="0.8"/><path d="M505.9,573.0 h3.4 l-1.7,1.8 z" fill="#444"/><circle cx="614.4" cy="573.7" r="4.6" fill="#fff" stroke="#c4c4c4" stroke-width="0.8"/><path d="M612.7,573.0 h3.4 l-1.7,1.8 z" fill="#444"/><circle cx="742.3" cy="573.7" r="4.6" fill="#fff" stroke="#c4c4c4" stroke-width="0.8"/><path d="M740.5,572.8 l1.8,1.8 l1.8,-1.8" fill="none" stroke="#555" stroke-width="0.8"/><circle cx="806.4" cy="613.6" r="4.6" fill="#fff" stroke="#c4c4c4" stroke-width="0.8"/><path d="M804.7,612.9 h3.4 l-1.7,1.8 z" fill="#444"/><circle cx="922.5" cy="613.6" r="4.6" fill="#fff" stroke="#c4c4c4" stroke-width="0.8"/><path d="M920.8,612.9 h3.4 l-1.7,1.8 z" fill="#444"/><circle cx="1051.0" cy="613.6" r="4.6" fill="#fff" stroke="#c4c4c4" stroke-width="0.8"/><path d="M1049.2,612.7 l1.8,1.8 l1.8,-1.8" fill="none" stroke="#555" stroke-width="0.8"/><path d="M503.4,588.2 l-2,2.2 l2,2.2" fill="none" stroke="#999" stroke-width="0.7"/><path d="M521.4,588.2 l2,2.2 l-2,2.2" fill="none" stroke="#999" stroke-width="0.7"/><circle cx="512.5" cy="590.8" r="3.6" fill="none" stroke="#444" stroke-width="0.9"/><path d="M512.5,588.8 v2 l1.2,0.8 M509.3,587.3 l1.3,-1.3 M515.7,587.3 l-1.3,-1.3" fill="none" stroke="#444" stroke-width="0.7"/><path d="M503.4,604.9 l-2,2.2 l2,2.2" fill="none" stroke="#999" stroke-width="0.7"/><path d="M521.4,604.9 l2,2.2 l-2,2.2" fill="none" stroke="#999" stroke-width="0.7"/><circle cx="512.5" cy="607.5" r="3.6" fill="none" stroke="#444" stroke-width="0.9"/><path d="M512.5,605.5 v2 l1.2,0.8 M509.3,604.0 l1.3,-1.3 M515.7,604.0 l-1.3,-1.3" fill="none" stroke="#444" stroke-width="0.7"/><path d="M503.4,621.7 l-2,2.2 l2,2.2" fill="none" stroke="#999" stroke-width="0.7"/><path d="M521.4,621.7 l2,2.2 l-2,2.2" fill="none" stroke="#999" stroke-width="0.7"/><circle cx="512.5" cy="624.3" r="3.6" fill="none" stroke="#444" stroke-width="0.9"/><path d="M512.5,622.3 v2 l1.2,0.8 M509.3,620.8 l1.3,-1.3 M515.7,620.8 l-1.3,-1.3" fill="none" stroke="#444" stroke-width="0.7"/><path d="M503.4,638.4 l-2,2.2 l2,2.2" fill="none" stroke="#999" stroke-width="0.7"/><path d="M521.4,638.4 l2,2.2 l-2,2.2" fill="none" stroke="#999" stroke-width="0.7"/><circle cx="512.5" cy="641.0" r="3.6" fill="none" stroke="#444" stroke-width="0.9"/><path d="M512.5,639.0 v2 l1.2,0.8 M509.3,637.5 l1.3,-1.3 M515.7,637.5 l-1.3,-1.3" fill="none" stroke="#444" stroke-width="0.7"/><path d="M503.4,655.2 l-2,2.2 l2,2.2" fill="none" stroke="#999" stroke-width="0.7"/><path d="M521.4,655.2 l2,2.2 l-2,2.2" fill="none" stroke="#999" stroke-width="0.7"/><circle cx="512.5" cy="657.8" r="3.6" fill="none" stroke="#444" stroke-width="0.9"/><path d="M512.5,655.8 v2 l1.2,0.8 M509.3,654.3 l1.3,-1.3 M515.7,654.3 l-1.3,-1.3" fill="none" stroke="#444" stroke-width="0.7"/><path d="M503.4,671.9 l-2,2.2 l2,2.2" fill="none" stroke="#999" stroke-width="0.7"/><path d="M521.4,671.9 l2,2.2 l-2,2.2" fill="none" stroke="#999" stroke-width="0.7"/><circle cx="512.5" cy="674.5" r="3.6" fill="none" stroke="#444" stroke-width="0.9"/><path d="M512.5,672.5 v2 l1.2,0.8 M509.3,671.0 l1.3,-1.3 M515.7,671.0 l-1.3,-1.3" fill="none" stroke="#444" stroke-width="0.7"/><path d="M503.4,688.6 l-2,2.2 l2,2.2" fill="none" stroke="#999" stroke-width="0.7"/><path d="M521.4,688.6 l2,2.2 l-2,2.2" fill="none" stroke="#999" stroke-width="0.7"/><circle cx="512.5" cy="691.2" r="3.6" fill="none" stroke="#444" stroke-width="0.9"/><path d="M512.5,689.2 v2 l1.2,0.8 M509.3,687.7 l1.3,-1.3 M515.7,687.7 l-1.3,-1.3" fill="none" stroke="#444" stroke-width="0.7"/><path d="M503.4,705.4 l-2,2.2 l2,2.2" fill="none" stroke="#999" stroke-width="0.7"/><path d="M521.4,705.4 l2,2.2 l-2,2.2" fill="none" stroke="#999" stroke-width="0.7"/><circle cx="512.5" cy="708.0" r="3.6" fill="none" stroke="#444" stroke-width="0.9"/><path d="M512.5,706.0 v2 l1.2,0.8 M509.3,704.5 l1.3,-1.3 M515.7,704.5 l-1.3,-1.3" fill="none" stroke="#444" stroke-width="0.7"/><path d="M1064.2,714.6 h-3.4 v7.8 h7.8 v-3.4" fill="none" stroke="#1a1a1a" stroke-width="1.4"/><path d="M1065.2,714.4 h3.6 v3.6 z" fill="#1a1a1a"/><path d="M1068,715.2 l-4.8,4.8" fill="none" stroke="#1a1a1a" stroke-width="1.4"/></svg>
<svg class="a" style="left:0;top:0" width="1117" height="775"><path d="M32.0,31.0 h7.0 a7,7 0 0 0 -7.0,7.0 z" fill="#000"/><path d="M1085.0,31.0 h-7.0 a7,7 0 0 1 7.0,7.0 z" fill="#000"/><path d="M32.0,739.0 h7.0 a7,7 0 0 1 -7.0,-7.0 z" fill="#000"/><path d="M1085.0,739.0 h-7.0 a7,7 0 0 0 7.0,-7.0 z" fill="#000"/></svg></body></html>
